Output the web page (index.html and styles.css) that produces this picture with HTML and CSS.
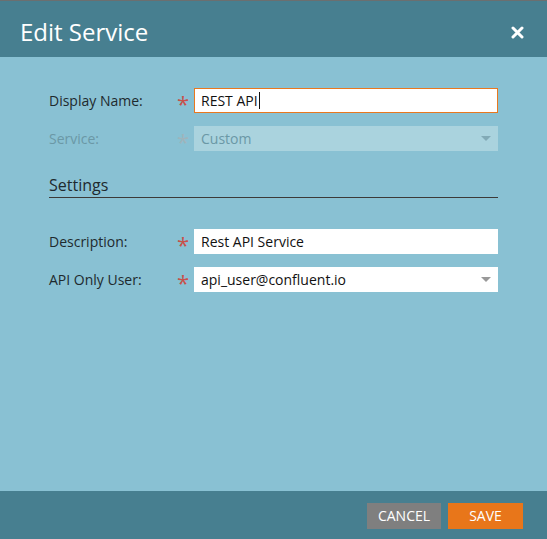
FILE: index.html
```html
<!DOCTYPE html>
<html>
<head>
<meta charset="utf-8">
<link rel="stylesheet" href="styles.css">
</head>
<body>
<div class="dialog">
  <div class="header">
    <h1 class="title">Edit Service</h1>
    <svg class="close" width="13" height="13" viewBox="0 0 13 13"><path d="M2 2 L11 11 M11 2 L2 11" stroke="#fff" stroke-width="3" stroke-linecap="round"/></svg>
  </div>
  <div class="content">
    <div class="row">
      <label class="label">Display Name:</label>
      <span class="req">*</span>
      <div class="field focused">REST API<span class="caret"></span></div>
    </div>
    <div class="row disabled">
      <label class="label">Service:</label>
      <span class="req">*</span>
      <div class="field select">Custom<span class="arrow"></span></div>
    </div>
    <div class="section">Settings</div>
    <div class="row">
      <label class="label">Description:</label>
      <span class="req">*</span>
      <div class="field">Rest API Service</div>
    </div>
    <div class="row">
      <label class="label">API Only User:</label>
      <span class="req">*</span>
      <div class="field select">api_user@confluent.io<span class="arrow"></span></div>
    </div>
  </div>
  <div class="footer">
    <button class="btn cancel">CANCEL</button>
    <button class="btn save">SAVE</button>
  </div>
</div>
</body>
</html>
```
FILE: styles.css
```css
html, body {
  margin: 0;
  padding: 0;
}
body {
  font-family: "Open Sans", "Liberation Sans", sans-serif;
  background: #89c1d3;
}
.dialog {
  display: flex;
  flex-direction: column;
  height: 539px;
  width: 547px;
}
.header {
  height: 56px;
  border-top: 1px solid #6b6f70;
  background: #477f90;
  display: flex;
  align-items: center;
  justify-content: space-between;
  padding: 0 23px 0 20px;
}
.title {
  margin: 0;
  font-size: 24px;
  font-weight: 400;
  color: #fff;
  line-height: 1;
  padding-top: 6px;
}
.close {
  display: block;
  margin-top: 6px;
}
.content {
  flex: 1;
  padding: 31px 49px 0 49px;
  display: flex;
  flex-direction: column;
}
.row {
  display: flex;
  align-items: center;
  height: 25px;
  margin-bottom: 13px;
}
.label {
  width: 128px;
  font-size: 14px;
  color: #1e2a2e;
}
.req {
  width: 17px;
  color: #c8504a;
  font-size: 22px;
  line-height: 1;
  height: 25px;
  padding-top: 4px;
  box-sizing: border-box;
}
.field {
  flex: 1;
  height: 25px;
  box-sizing: border-box;
  background: #fff;
  font-size: 14px;
  color: #111;
  padding: 0 7px;
  display: flex;
  align-items: center;
  position: relative;
}
.field.focused {
  border: 1px solid #e8781f;
  padding: 0 6px;
}
.caret {
  display: inline-block;
  width: 1px;
  height: 17px;
  background: #111;
  margin-left: 1px;
}
.arrow {
  position: absolute;
  right: 7px;
  top: 10px;
  width: 0;
  height: 0;
  border-left: 5px solid transparent;
  border-right: 5px solid transparent;
  border-top: 5px solid #999;
}
.disabled .label {
  color: #6b98a6;
}
.disabled .req {
  color: #9fb4bb;
}
.disabled .field {
  background: #aad3de;
  color: #6b98a6;
}
.disabled .arrow {
  border-top-color: #82aab6;
}
.section {
  font-size: 16px;
  color: #1e2a2e;
  padding: 0 0 2px 0;
  border-bottom: 1px solid #3c3a38;
  margin-top: 11px;
  margin-bottom: 31px;
  line-height: 20px;
}
.footer {
  height: 48px;
  background: #477f90;
  display: flex;
  justify-content: flex-end;
  align-items: center;
  gap: 7px;
  padding: 0 24px 0 0;
}
.btn {
  border: none;
  height: 26px;
  font-family: "Open Sans", "Liberation Sans", sans-serif;
  font-size: 14px;
  color: #fff;
  padding: 0;
  margin-top: 1px;
}
.cancel {
  width: 74px;
  background: #7f7f7f;
}
.save {
  width: 75px;
  background: #e8761a;
}
```
